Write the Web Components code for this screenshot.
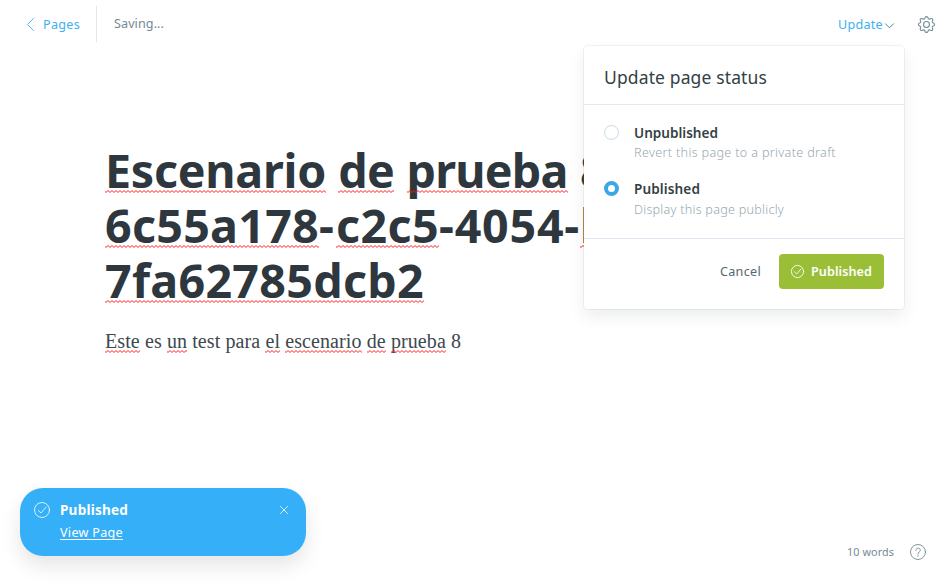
<!DOCTYPE html>
<html lang="es">
<head>
<meta charset="utf-8">
<title>Editor</title>
<style>
html,body{margin:0;height:100%;overflow:hidden;background:#fff}
body{font-family:"Noto Sans","Open Sans",sans-serif;color:#394047}
</style>
</head>
<body>
<page-editor></page-editor>
<script>
function define(name, html, setup) {
  customElements.define(name, class extends HTMLElement {
    connectedCallback() {
      if (this.shadowRoot) return;
      this.attachShadow({mode: 'open'}).innerHTML = html;
      if (setup) setup(this);
    }
  });
}

/* A run of text whose tracking is adjusted to span the width in "w". */
define('fit-text', `<style>:host{display:inline-block;white-space:pre;flex:none;line-height:inherit;position:relative}
:host([spell])::after{content:"";position:absolute;left:0;right:0;top:var(--wave,20px);height:3px;
background:url("data:image/svg+xml,%3Csvg xmlns='http://www.w3.org/2000/svg' width='4' height='3'%3E%3Cpath d='M-1 .5L1 2.5L3 .5L5 2.5' fill='none' stroke='%23f11' stroke-width='.95'/%3E%3C/svg%3E") repeat-x}
</style><slot></slot>`, el => {
  const w = +el.getAttribute('w');
  if (!w) return;
  const n = el.textContent.length;
  el.style.letterSpacing = ((w - el.getBoundingClientRect().width) / n) + 'px';
  el.style.width = w + 'px';
});

const paths = {
  back: '<path d="M7.5 .5L1.5 6.5L7.5 12.5"/>',
  down: '<path d="M.5 .8L4.5 4.8L8.5 .8"/>',
  close: '<path d="M.5 .5L8.5 8.5M8.5 .5L.5 8.5"/>',
  check: '<circle cx="8" cy="8" r="7.5"/><path d="M4.3 8.4L7 11L12.2 5"/>',
  help: '<circle cx="8" cy="8" r="7.5"/><path d="M5.8 6.3C5.8 3.4 10.3 3.4 10.3 6.2C10.3 8 8 7.9 8 10"/><path d="M8 11.3V12.2"/>',
  gear: '<circle cx="8" cy="8" r="2.8"/><path d="M6.55 1.65C6.95 .2 9.05 .2 9.45 1.65L9.55 2.05A1.5 1.5 0 0 0 11.4 2.85L11.95 2.55C13.3 1.9 14.45 3 13.8 4.2L13.5 4.75A1.45 1.45 0 0 0 14.3 6.55L14.6 6.65C15.9 7.05 15.9 8.95 14.6 9.35L14.3 9.45A1.45 1.45 0 0 0 13.5 11.25L13.8 11.8C14.45 13 13.3 14.1 11.95 13.45L11.4 13.15A1.5 1.5 0 0 0 9.55 13.95L9.45 14.35C9.05 15.8 6.95 15.8 6.55 14.35L6.45 13.95A1.5 1.5 0 0 0 4.6 13.15L4.05 13.45C2.7 14.1 1.55 13 2.2 11.8L2.5 11.25A1.45 1.45 0 0 0 1.7 9.45L1.4 9.35C.1 8.95 .1 7.05 1.4 6.65L1.7 6.55A1.45 1.45 0 0 0 2.5 4.75L2.2 4.2C1.55 3 2.7 1.9 4.05 2.55L4.6 2.85A1.5 1.5 0 0 0 6.45 2.05Z"/>'
};
define('ui-icon', `<style>:host{display:block;flex:none}svg{display:block;fill:none;stroke:currentColor;stroke-linecap:round;stroke-linejoin:round;overflow:visible}</style><svg></svg>`, el => {
  const svg = el.shadowRoot.querySelector('svg');
  svg.setAttribute('viewBox', el.getAttribute('box') || '0 0 16 16');
  svg.setAttribute('width', el.getAttribute('width'));
  svg.setAttribute('height', el.getAttribute('height'));
  svg.setAttribute('stroke-width', el.getAttribute('stroke') || 1);
  svg.innerHTML = paths[el.getAttribute('name')];
});

define('editor-bar', `<style>
:host{display:flex;height:48px;box-sizing:border-box;padding:6px 15px 6px 26px;font-size:12.6px;line-height:36px;color:#7c8b9a}
.back{display:flex;align-items:center;gap:8px;color:#3eb0ef;padding-right:16px;border-right:1px solid #dfe9f1}
.back ui-icon{color:#3eb0ef}
.back fit-text,.update fit-text{line-height:34px;padding-top:2px}
.save{margin-left:17px;line-height:36px;color:#738a94}
.update{margin-left:auto;display:flex;align-items:center;gap:2px;color:#3eb0ef}
.update ui-icon{color:#5f7f94;margin-top:3px}
.gear{align-self:center;margin-left:24px;color:#738a94}
</style>
<div class="back"><ui-icon name="back" box="0 0 9 13" width="9" height="13" stroke=".9"></ui-icon><fit-text w="37">Pages</fit-text></div>
<div class="save"><fit-text w="50">Saving...</fit-text></div>
<div class="update"><fit-text w="45">Update</fit-text><ui-icon name="down" box="0 0 9 6" width="9" height="6"></ui-icon></div>
<ui-icon class="gear" name="gear" width="17" height="17"></ui-icon>`);

define('page-content', `<style>
:host{display:block;padding:95px 0 0 105px}
h1{margin:0;font-size:46.6px;font-weight:700;line-height:55px;color:#2e373d;--wave:47px}
.line{display:flex}
.line1{gap:12.3px}
p{margin:17px 0 0;font:20px/32px "Liberation Serif",serif;letter-spacing:.1px;color:#3d484f;--wave:25px}
</style>
<h1><div class="line line1"><fit-text spell w="221">Escenario</fit-text><fit-text spell w="56">de</fit-text><fit-text spell w="161">prueba</fit-text><fit-text w="27">8</fit-text></div>
<div class="line"><fit-text spell w="214">6c55a178</fit-text><fit-text w="17">-</fit-text><fit-text spell w="103">c2c5</fit-text><fit-text w="141">-4054-</fit-text><fit-text spell w="110">be0b</fit-text></div>
<div class="line"><fit-text spell w="319">7fa62785dcb2</fit-text></div></h1>
<p><fit-text spell>Este</fit-text> es <fit-text spell>un</fit-text> test para <fit-text spell>el</fit-text> <fit-text spell>escenario</fit-text> <fit-text spell>de</fit-text> <fit-text spell>prueba</fit-text> 8</p>`);

define('status-option', `<style>
:host{display:grid;grid-template-columns:15px 1fr;column-gap:15px;color:#343f44}
i{box-sizing:border-box;width:15px;height:15px;margin-top:2.5px;border:1px solid #c5d9e8;border-radius:50%}
:host([checked]) i{border:4.5px solid #3ba8e6}
.name{font-size:13.6px;font-weight:600;line-height:20px}
.note{font-size:12.6px;font-weight:300;line-height:20px;color:#98a8b0}
:host([checked]) .note{padding-top:1px}
</style><i></i><div><div class="name"><slot name="name"></slot></div><div class="note"><slot></slot></div></div>`);

define('status-menu', `<style>
:host{position:absolute;left:584px;top:46px;width:320px;height:263px;background:#fff;border-radius:4px;box-shadow:0 0 0 1px rgba(99,114,130,.09),0 8px 16px rgba(27,39,51,.08);display:flex;flex-direction:column}
header{box-sizing:border-box;height:59px;padding:17px 20px 0;border-bottom:1px solid #dfebf3;font-size:17.5px;line-height:28px;color:#343f44}
main{box-sizing:border-box;height:134px;padding:17.5px 20px 0;border-bottom:1px solid #dfe9f4;display:flex;flex-direction:column;gap:16px}
footer{display:flex;justify-content:flex-end;align-items:center;gap:18px;padding:15px 20px 0;font-size:12.6px;color:#55686f}
.go{box-sizing:border-box;display:flex;align-items:center;gap:7px;width:105px;height:35px;padding-left:12px;border-radius:4px;background:#9abf37;color:#fff;font-weight:600}
</style>
<header><fit-text w="163">Update page status</fit-text></header>
<main><status-option><fit-text slot="name" w="84">Unpublished</fit-text><fit-text w="202">Revert this page to a private draft</fit-text></status-option>
<status-option checked><fit-text slot="name" w="66">Published</fit-text><fit-text w="150">Display this page publicly</fit-text></status-option></main>
<footer><fit-text w="41">Cancel</fit-text><div class="go"><ui-icon name="check" width="13" height="13" stroke="1.1"></ui-icon><fit-text w="61">Published</fit-text></div></footer>`);

define('toast-note', `<style>
:host{position:absolute;left:20px;top:488px;width:286px;height:68px;box-sizing:border-box;padding:11px 17px 0 14px;border-radius:23px;background:#35b0f8;color:#fff;box-shadow:0 10px 20px rgba(0,0,0,.1);display:flex;align-items:flex-start}
.mark{margin:3px 10px 0 0}
.close{margin:6.5px 1px 0 auto}
b{display:block;font-size:13.6px;line-height:22px}
a{display:block;width:63px;margin-top:1px;font-size:12.6px;line-height:22px;position:relative}
a::after{content:"";position:absolute;left:0;right:0;top:17px;height:1px;background:#fff}
</style><ui-icon class="mark" name="check" width="16" height="16" stroke=".8"></ui-icon>
<div><b><fit-text w="68">Published</fit-text></b><a><fit-text w="63">View Page</fit-text></a></div>
<ui-icon class="close" name="close" box="0 0 9 9" width="8" height="8" stroke=".9"></ui-icon>`);

define('word-count', `<style>
:host{position:absolute;right:24px;top:541px;display:flex;align-items:center;gap:16px;height:22px;font-size:10.8px;line-height:22px;color:#738a94}
</style><fit-text w="47">10 words</fit-text><ui-icon name="help" width="16" height="16" stroke=".9"></ui-icon>`);

define('page-editor', `<style>:host{display:block;position:relative;width:950px;height:584px;overflow:hidden;background:#fff}</style>
<editor-bar></editor-bar><page-content></page-content><status-menu></status-menu><toast-note></toast-note><word-count></word-count>`);
</script>
</body>
</html>
